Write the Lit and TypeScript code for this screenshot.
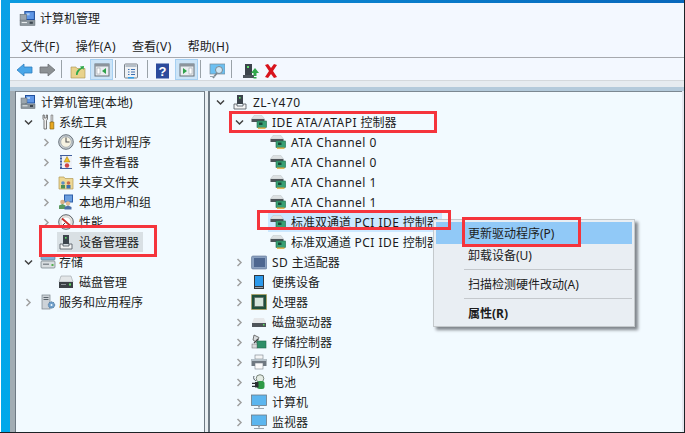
import { LitElement, html, css, svg } from "lit";
import { customElement } from "lit/decorators.js";

const monitorMini = svg`<rect x="5" y="1" width="10" height="8.500" fill="#1f4f9c"/><rect x="6" y="2" width="8" height="6.500" fill="#5f97e6"/><rect x="7" y="3" width="3" height="2" fill="#a9cdf5"/><rect x="1" y="4" width="6" height="5.500" fill="#9aa5ad" stroke="#5e686f" stroke-width=".5"/><rect x="1" y="10" width="14" height="4.500" fill="#8d979e" stroke="#5e686f" stroke-width=".5"/><rect x="2.500" y="11.300" width="5" height="1" fill="#e6eaec"/><rect x="10" y="11" width="3" height="2" fill="#3c4650"/>`;

const icons: Record<string, unknown> = {
  computerMgmt: monitorMini,
  tools: svg`<path d="M3 1v4l1 1.500V15h2.500V6.500L7.500 5V1L6.300 1v3H4.300V1z" fill="#eeeeee" stroke="#5c5c5c" stroke-width=".8"/><path d="M11 1h1.800v6.500H11z" fill="#dcdcdc" stroke="#666" stroke-width=".6"/><path d="M10 8h3.800v7H10z" fill="#e8a820" stroke="#8a6510" stroke-width=".7"/>`,
  clock: svg`<circle cx="8" cy="8" r="7.300" fill="#c9cfd4" stroke="#68727a"/><circle cx="8" cy="8" r="5.300" fill="#f6f3e2" stroke="#8a949b" stroke-width=".6"/><path d="M8 3.500V8h3.500" fill="none" stroke="#555" stroke-width="1.100"/>`,
  eventlog: svg`<rect x="2" y="1" width="12" height="14" fill="#3f5f9e"/><rect x="4" y="2" width="10" height="12" fill="#eef2f8"/><path d="M9 2.500l3 5.500H6z" fill="#f0c020" stroke="#99760e" stroke-width=".5"/><circle cx="9" cy="11.500" r="2.200" fill="#d04848"/><path d="M2 3h2M2 6h2M2 9h2M2 12h2" stroke="#dfe6f2" stroke-width="1"/>`,
  share: svg`<path d="M1 3h5l1 1.500h8V15H1z" fill="#eed995" stroke="#b39a55" stroke-width=".7"/><circle cx="5" cy="9" r="1.800" fill="#5d8fc8"/><rect x="3" y="11" width="4" height="3.500" fill="#4a8f55"/><circle cx="10.500" cy="9" r="1.800" fill="#c66a48"/><rect x="8.500" y="11" width="4" height="3.500" fill="#3d6fb0"/>`,
  users: svg`<rect x="6" y="0.500" width="9" height="8" fill="#2f5fa8"/><rect x="7" y="1.500" width="7" height="6" fill="#6b9fe0"/><circle cx="4.500" cy="8" r="2.300" fill="#d9b088"/><path d="M1 15v-3.500l3.500-1.500 3 1.500V15z" fill="#5a9a60"/><circle cx="10" cy="9.500" r="2.200" fill="#e3bb92"/><path d="M6.500 15.500v-2.500l3.500-1.500 3.500 1.500v2.500z" fill="#4a6fa8"/>`,
  perf: svg`<circle cx="8" cy="8" r="7.300" fill="#e8e6e0" stroke="#5c636a"/><circle cx="8" cy="8" r="5" fill="#fff" stroke="#b0b4b8" stroke-width=".5"/><path d="M4 4.500l8 7" stroke="#c8322c" stroke-width="1.800"/><path d="M5 11l2-2" stroke="#444" stroke-width="1"/>`,
  device: svg`<rect x="5" y="1" width="6" height="9" fill="#3c444c"/><rect x="7" y="3" width="1.600" height="1.600" fill="#5ee06a"/><path d="M2 10h3v2h6v-2h3v5H2z" fill="#f3f4f4" stroke="#4c545c" stroke-width=".8"/>`,
  storage: svg`<rect x="1" y="1" width="14" height="5" rx="1" fill="#7fb3d8" stroke="#56758a" stroke-width=".6"/><rect x="1" y="7" width="14" height="7" rx="1" fill="#d8dde0" stroke="#6e7880" stroke-width=".7"/><rect x="3" y="9.500" width="6" height="1.500" fill="#868e94"/><rect x="11.500" y="10" width="2" height="2" fill="#52b050"/>`,
  disk: svg`<path d="M3 2h10l2 6H1z" fill="#e3e6e8" stroke="#9aa1a6" stroke-width=".6"/><rect x="1" y="8" width="14" height="6" fill="#3c4046"/><rect x="11" y="9.500" width="2" height="2" fill="#5fe060"/><rect x="3" y="10" width="5" height="1" fill="#90959a"/>`,
  services: svg`<rect x="2" y="1" width="8" height="14" fill="#cdd3d8" stroke="#78828a" stroke-width=".7"/><path d="M3.500 3.500h5M3.500 5.500h5" stroke="#5a646c"/><circle cx="11.500" cy="11" r="3.200" fill="#6f9fca" stroke="#43698a" stroke-width=".7" stroke-dasharray="1.500 .8"/><circle cx="11.500" cy="11" r="1" fill="#f2faff"/>`,
  ide: svg`<path d="M0.500 5L3 1.500h8L13.500 5z" fill="#dde1e3" stroke="#b4babd" stroke-width=".4"/><rect x="0.500" y="5" width="13" height="3" fill="#4e545a"/><rect x="6" y="7" width="9.500" height="6.500" fill="#38a074" stroke="#1f6a4a" stroke-width=".6"/><rect x="8" y="8.500" width="3.500" height="2.500" fill="#1a4c38"/><rect x="7" y="13.500" width="7.500" height="1.300" fill="#d8a830"/>`,
  sd: svg`<rect x="0.500" y="2" width="15.500" height="13" rx="1.500" fill="#8aa0bf" stroke="#5a7090" stroke-width=".6"/><rect x="3" y="4" width="11" height="9" fill="#4e6790"/>`,
  portable: svg`<rect x="3" y="1" width="10" height="14" fill="#33383e"/><rect x="4" y="2" width="8" height="10" fill="#2c9aec"/><rect x="4" y="13" width="8" height="1" fill="#9aa2a8"/>`,
  cpu: svg`<rect x="0.500" y="0.500" width="15" height="15" fill="#1f4f3a" stroke="#c2a040" stroke-width="1" stroke-dasharray="1 1"/><rect x="3.500" y="3.500" width="9" height="9" fill="#d6e6dc" stroke="#54605a" stroke-width=".6"/>`,
  drive: svg`<path d="M3 4h10l2 5H1z" fill="#e6e8ea"/><rect x="1" y="9" width="14" height="4" fill="#4e5459"/><rect x="12" y="10" width="1.500" height="1.500" fill="#5fe060"/>`,
  storctl: svg`<path d="M3 1l5 2.500-2 5-4-2.500z" fill="#d8dcde" stroke="#555" stroke-width=".8"/><path d="M7 5l-4 4" stroke="#444" stroke-width="1.200"/><rect x="6" y="7" width="9" height="7" fill="#2f8f68" stroke="#1f6a4a" stroke-width=".6"/><rect x="1" y="10" width="5" height="4" fill="#d6dadc" stroke="#666" stroke-width=".5"/>`,
  printer: svg`<rect x="4" y="1" width="8" height="4" fill="#f4f5f6" stroke="#7a828a" stroke-width=".6"/><rect x="0.500" y="5" width="15" height="7" fill="#6e7880"/><rect x="0.500" y="5" width="15" height="2" fill="#b4c0c8"/><rect x="4" y="9" width="8" height="6" fill="#fbfbfb" stroke="#7a828a" stroke-width=".6"/>`,
  battery: svg`<circle cx="9" cy="4.500" r="3.800" fill="#e4ece4" stroke="#5e6a5e" stroke-width=".8"/><path d="M5 7c-2-1-3-3-2-5" fill="none" stroke="#4e565c" stroke-width="1"/><rect x="6" y="7" width="7.500" height="8" rx="2.500" fill="#2e9a46"/><rect x="4" y="8" width="3.500" height="5.500" fill="#2b2f33"/><path d="M1 9.300h3M1 12.300h3" stroke="#2b2f33" stroke-width="1.300"/>`,
  computer: svg`<rect x="0.500" y="1" width="15" height="10.500" fill="#5cb6ef" stroke="#6b7a86" stroke-width=".8"/><path d="M7 11.500h2v2H7z" fill="#9aa4ac"/><rect x="3" y="14" width="10" height="1" fill="#9aa4ac"/>`,
  folderUp: svg`<path d="M1 4h5l1 1.500h8V15H1z" fill="#e8d28c" stroke="#a8924e" stroke-width=".6"/><path d="M6 12c0-4 2-6 5-7l-1-1.500L14 3l-.5 4-1-1.500C10 6.500 8 9 7.500 12z" fill="#2ea84a"/>`,
  paneLeft: svg`<rect x="1" y="2" width="14" height="12" fill="#e9edf1" stroke="#666e76"/><rect x="1" y="2" width="14" height="2.500" fill="#8c949c"/><rect x="3" y="6" width="3" height="6" fill="#fff" stroke="#8c949c" stroke-width=".5"/><path d="M12 6v6l-4-3z" fill="#2fa24a"/>`,
  paneRight: svg`<rect x="1" y="2" width="14" height="12" fill="#e9edf1" stroke="#666e76"/><rect x="1" y="2" width="14" height="2.500" fill="#8c949c"/><rect x="10" y="6" width="3" height="6" fill="#fff" stroke="#8c949c" stroke-width=".5"/><path d="M4 6v6l4-3z" fill="#2fa24a"/>`,
  props: svg`<rect x="1.500" y="1" width="13" height="14" rx="1" fill="#eef1f4" stroke="#7a828a"/><rect x="2.500" y="2" width="11" height="2" fill="#b4bec8"/><path d="M5 6.500h1.500M8 6.500h4M5 9h1.500M8 9h4M5 11.500h1.500M8 11.500h4" stroke="#3c6fb0"/><rect x="5" y="14" width="6" height="1.500" fill="#35a3ee"/>`,
  help: svg`<rect x="1" y="0.500" width="13" height="15" fill="#2b4a9c"/><text x="7.500" y="13" text-anchor="middle" font-size="13" font-weight="700" font-family="Liberation Sans" fill="#fff">?</text>`,
  scan: svg`<rect x="1" y="1" width="15" height="10" fill="#6cc0f2" stroke="#7a8a96" stroke-width=".7"/><circle cx="10" cy="7" r="3.500" fill="#cfe7f5" stroke="#7b8790" stroke-width="1"/><path d="M8 10l-4 5" stroke="#7b8790" stroke-width="1.800"/><rect x="1" y="13" width="5" height="1" fill="#9aa4ac"/>`,
  update: svg`<rect x="3" y="1" width="7" height="11" fill="#3c444c"/><rect x="5" y="3" width="2" height="2" fill="#5ee06a"/><rect x="1" y="12" width="11" height="3" fill="#4c545c"/><path d="M13 5l4 5h-2.500v3h-3v-3H9z" fill="#31a84c"/><rect x="11.500" y="14" width="3" height="1.500" fill="#31a84c"/>`,
  remove: svg`<path d="M2 2l3-1 3 4 3-4 3 1-4 6 4 6-3 1-3-4-3 4-3-1 4-6z" fill="#d8141c"/>`,
};

const Icon = (name: string, w = 16, h = 16) =>
  html`<svg class="ic" width=${w} height=${h} viewBox="0 0 16 16">${icons[name]}</svg>`;

const Chev = (state: "open" | "closed" | "none") => {
  if (state === "none") return html`<span class="chev"></span>`;
  return html`<svg class="chev" width="9" height="9" viewBox="0 0 9 9">
    ${state === "open"
      ? svg`<path d="M1 2.500l3.500 3.500L8 2.500" fill="none" stroke="#404040" stroke-width="1.500"/>`
      : svg`<path d="M2.500 1L6 4.500 2.500 8" fill="none" stroke="#a0a0a0" stroke-width="1.500"/>`}
  </svg>`;
};

/* Latin runs sit slightly wider than the CJK ones, so they get their own tracking. */
const Seg = (text: string) =>
  text.split(/([\x20-\x7e]+)/).filter(Boolean).map((part) =>
    /^[\x20-\x7e]/.test(part) ? html`<span class="lat">${part}</span>` : part
  );

type Row = { text: string; icon: string; cls: string; chev: "open" | "closed" | "none"; sel?: string };

const leftRows: Row[] = [
  { text: "计算机管理(本地)", icon: "computerMgmt", cls: "l0", chev: "none" },
  { text: "系统工具", icon: "tools", cls: "l1", chev: "open" },
  { text: "任务计划程序", icon: "clock", cls: "l2", chev: "closed" },
  { text: "事件查看器", icon: "eventlog", cls: "l2", chev: "closed" },
  { text: "共享文件夹", icon: "share", cls: "l2", chev: "closed" },
  { text: "本地用户和组", icon: "users", cls: "l2", chev: "closed" },
  { text: "性能", icon: "perf", cls: "l2", chev: "closed" },
  { text: "设备管理器", icon: "device", cls: "l2", chev: "none", sel: "gray" },
  { text: "存储", icon: "storage", cls: "l1", chev: "open" },
  { text: "磁盘管理", icon: "disk", cls: "l2", chev: "none" },
  { text: "服务和应用程序", icon: "services", cls: "l1", chev: "closed" },
];

const rightRows: Row[] = [
  { text: "ZL-Y470", icon: "device", cls: "r0", chev: "open" },
  { text: "IDE ATA/ATAPI 控制器", icon: "ide", cls: "r1", chev: "open" },
  { text: "ATA Channel 0", icon: "ide", cls: "r2", chev: "none" },
  { text: "ATA Channel 0", icon: "ide", cls: "r2", chev: "none" },
  { text: "ATA Channel 1", icon: "ide", cls: "r2", chev: "none" },
  { text: "ATA Channel 1", icon: "ide", cls: "r2", chev: "none" },
  { text: "标准双通道 PCI IDE 控制器", icon: "ide", cls: "r2", chev: "none", sel: "blue" },
  { text: "标准双通道 PCI IDE 控制器", icon: "ide", cls: "r2", chev: "none" },
  { text: "SD 主适配器", icon: "sd", cls: "r1", chev: "closed" },
  { text: "便携设备", icon: "portable", cls: "r1", chev: "closed" },
  { text: "处理器", icon: "cpu", cls: "r1", chev: "closed" },
  { text: "磁盘驱动器", icon: "drive", cls: "r1", chev: "closed" },
  { text: "存储控制器", icon: "storctl", cls: "r1", chev: "closed" },
  { text: "打印队列", icon: "printer", cls: "r1", chev: "closed" },
  { text: "电池", icon: "battery", cls: "r1", chev: "closed" },
  { text: "计算机", icon: "computer", cls: "r1", chev: "closed" },
  { text: "监视器", icon: "computer", cls: "r1", chev: "closed" },
];

@customElement("app-root")
export class AppRoot extends LitElement {
  static styles = css`
    :host {
      display: block;
      width: 685px;
      height: 433px;
      overflow: hidden;
      position: relative;
      font-family: "Noto Sans", "Noto Sans CJK SC", sans-serif;
      font-size: 12px;
      color: #1c1c1c;
      background: #fff;
    }
    .lat { letter-spacing: .45px; }
    .desk { display: flex; height: 432px; width: 684px; border-right: 1px solid #1c2226; border-bottom: 1px solid #1c2226; background: #fff; }
    .stripe { width: 9px; margin-left: 1px; background: linear-gradient(#0aa0e6, #00a8ea); flex: none; }
    .col { flex: 1; display: flex; flex-direction: column; min-width: 0; }
    .topbar { height: 3px; background: linear-gradient(90deg, #0a9ae0, #0868bc); flex: none; }
    .title { height: 30px; padding-bottom: 2px; display: flex; align-items: center; gap: 4px; padding-left: 9px; background: #f3f8ff; flex: none; }
    .menu { height: 22px; display: flex; align-items: center; padding-left: 11px; gap: 16px; background: #f3f8ff; flex: none; }
    .menu span { display: block; }
    .menu span.lat { display: inline; }
    .toolbar { height: 22px; display: flex; align-items: center; padding-left: 6px; background: #f3f8ff; border-top: 1px solid #a6a9ae; flex: none; }
    .toolbar svg { flex: none; }
    .arrow { margin-top: 2px; }
    .arrow.fwd { margin-left: 6px; margin-right: 5px; }
    .sep { width: 1px; height: 18px; background: #9aa2a8; flex: none; }
    .tb { width: 22px; height: 21px; margin-top: 1px; display: flex; align-items: center; justify-content: center; flex: none; }
    .tb svg { margin-top: 2px; }
    .tb.on { width: 23px; box-sizing: border-box; background: #cce4f7; border: 1px solid #a6d0f2; }
    .tb.on svg { margin-top: 0; }
    .tb.narrow { width: 18px; }
    .m1 { margin-left: 1px; }
    .m4 { margin-left: 4px; }
    .m5 { margin-left: 5px; }
    .m9 { margin-left: 9px; }
    .sep.s2 { margin-left: 2px; }
    .sep.s3 { margin-left: 3px; }
    .sep.s5 { margin-left: 5px; }
    .strip1 { height: 7px; background: #e6ebf0; flex: none; border-top: 1px solid #d4d8dc; box-sizing: border-box; }
    .strip2 { height: 4px; background: #b4cadb; flex: none; }
    .panes { flex: 1; display: flex; min-height: 0; background: #a2adb4; }
    .gut { width: 5px; flex: none; border-right: 1px solid #6e7a84; background: #a2adb4; }
    .pane { background: #f2faff; overflow: hidden; border-top: 1px solid #7c8892; }
    .pane.left { width: 188px; flex: none; border-right: 1px solid #6e7a84; }
    .mid { width: 3px; flex: none; background: #e8eef2; border-right: 2px solid #6e7a84; }
    .pane.right { flex: 1; }
    .edge { width: 2px; flex: none; background: #e4e8f0; }
    .row { height: 20px; display: flex; align-items: center; white-space: nowrap; }
    .chev { width: 9px; height: 9px; flex: none; display: block; }
    .lbl { padding: 2px 1px 0; line-height: 18px; margin-left: 4px; }
    .l0 { padding-left: 4px; }
    .l0 .chev { display: none; }
    .l1 { padding-left: 8px; }
    .l1 .ic { margin-left: 7px; }
    .l1 .lbl { margin-left: 2px; }
    .l2 { padding-left: 26px; }
    .l2 .ic { margin-left: 7px; }
    .l2 .lbl { margin-left: 4px; }
    .r0 { padding-left: 6px; }
    .r0 .ic { margin-left: 7px; }
    .r0 .lbl { margin-left: 4px; }
    .r1 { padding-left: 25px; }
    .r1 .ic { margin-left: 7px; }
    .r1 .lbl { margin-left: 4px; }
    .r2 { padding-left: 50px; }
    .r2 .chev { display: none; }
    .r2 .ic { margin-left: 10px; }
    .r2 .lbl { margin-left: 4px; }
    .hl { display: flex; align-items: center; height: 20px; flex: none; }
    .hl.gray { background: #d9e0e4; margin-left: 6px; padding-right: 3px; }
    .hl.gray .ic { margin-left: 1px; }
    .hl.blue { background: #cce8ff; margin-left: 8px; width: 174px; overflow: hidden; }
    .hl.blue .ic { margin-left: 2px; }
    .menubox { position: absolute; left: 433px; top: 219px; width: 202px; height: 108px; box-sizing: border-box; background: #e9eef3; border: 1px solid #c4c9cc; box-shadow: 3px 3px 3px #80868c; padding: 2px; }
    .mi { height: 22px; padding-left: 32px; display: flex; align-items: center; }
    .mi.active { background: #91c9f7; }
    .mi.b { font-weight: 700; }
    .ms { height: 1px; background: #c4c8cc; margin: 3px 0 3px 28px; }
    .box { position: absolute; box-sizing: border-box; border: 3px solid #f5343c; pointer-events: none; }
    .b1 { left: 39px; top: 225px; width: 118px; height: 32px; }
    .b2 { left: 229px; top: 111px; width: 208px; height: 22px; }
    .b3 { left: 257px; top: 210px; width: 194px; height: 20px; }
    .b4 { left: 462px; top: 217px; width: 119px; height: 30px; }
  `;

  private renderRow(r: Row) {
    const inner = html`${Icon(r.icon)}<span class="lbl">${Seg(r.text)}</span>`;
    return html`<div class="row ${r.cls}">
      ${Chev(r.chev)}
      ${r.sel ? html`<div class="hl ${r.sel}">${inner}</div>` : inner}
    </div>`;
  }

  render() {
    return html`
      <div class="desk">
        <div class="stripe"></div>
        <div class="col">
          <div class="topbar"></div>
          <div class="title">${Icon("computerMgmt", 17, 17)}<span>计算机管理</span></div>
          <div class="menu">
            ${["文件(F)", "操作(A)", "查看(V)", "帮助(H)"].map((m) => html`<span>${Seg(m)}</span>`)}
          </div>
          <div class="toolbar">
            <svg class="arrow" width="17" height="14" viewBox="0 0 17 14"><path d="M1 7l7-6v3h8v6H8v3z" fill="#4aa6e8" stroke="#2e7fc0" stroke-width=".8"/></svg>
            <svg class="arrow fwd" width="17" height="14" viewBox="0 0 17 14"><path d="M16 7L9 1v3H1v6h8v3z" fill="#8c9094" stroke="#6c7074" stroke-width=".8"/></svg>
            <div class="sep"></div>
            <div class="tb m5">${Icon("folderUp")}</div>
            <div class="tb on m1">${Icon("paneLeft")}</div>
            <div class="sep s2"></div>
            <div class="tb m4">${Icon("props")}</div>
            <div class="sep s5"></div>
            <div class="tb m4">${Icon("help")}</div>
            <div class="tb on m1">${Icon("paneRight")}</div>
            <div class="sep s2"></div>
            <div class="tb m5">${Icon("scan")}</div>
            <div class="sep s3"></div>
            <div class="tb narrow m9">${Icon("update", 18, 16)}</div>
            <div class="tb m1">${Icon("remove")}</div>
          </div>
          <div class="strip1"></div>
          <div class="strip2"></div>
          <div class="panes">
            <div class="gut"></div>
            <div class="pane left">${leftRows.map((r) => this.renderRow(r))}</div>
            <div class="mid"></div>
            <div class="pane right">${rightRows.map((r) => this.renderRow(r))}</div>
            <div class="edge"></div>
          </div>
        </div>
      </div>
      <div class="menubox">
        <div class="mi active">更新驱动程序(P)</div>
        <div class="mi">卸载设备(U)</div>
        <div class="ms"></div>
        <div class="mi">扫描检测硬件改动(A)</div>
        <div class="ms"></div>
        <div class="mi b">属性(R)</div>
      </div>
      <div class="box b1"></div>
      <div class="box b2"></div>
      <div class="box b3"></div>
      <div class="box b4"></div>
    `;
  }
}
